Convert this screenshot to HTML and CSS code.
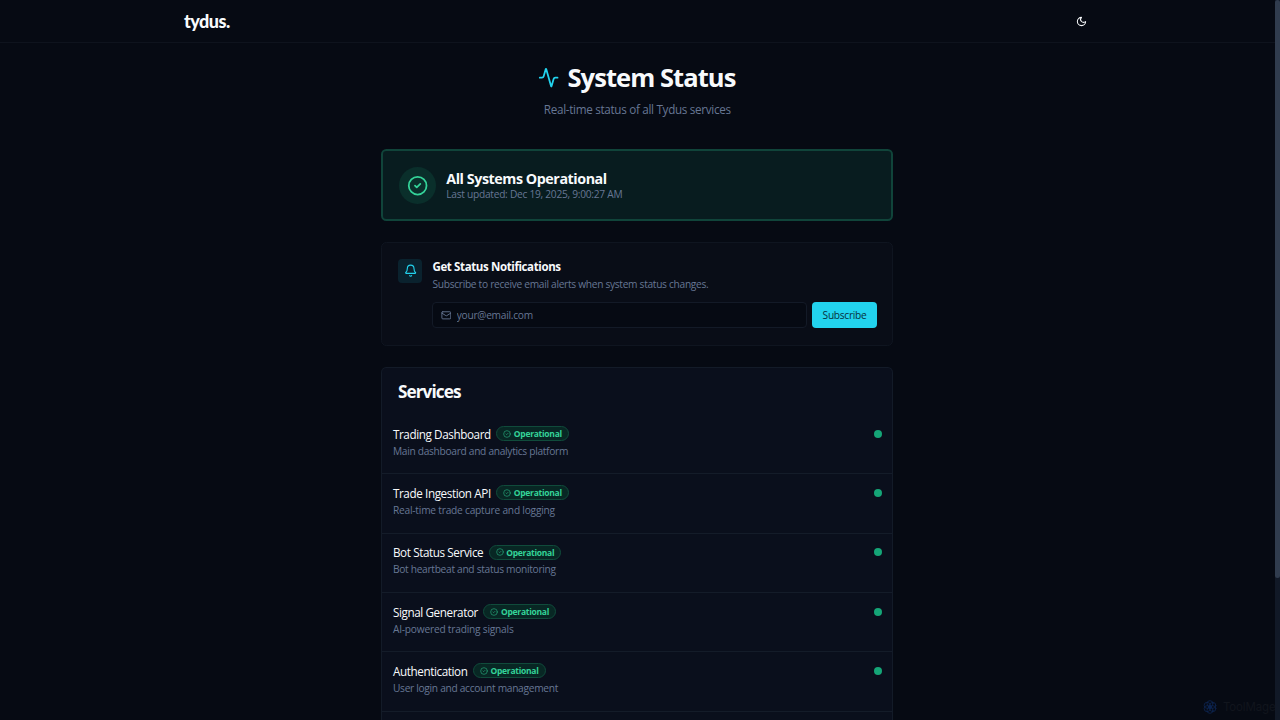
FILE: index.html
```
<!DOCTYPE html>
<html lang="en">
<head>
<meta charset="UTF-8">
<title>System Status - Tydus</title>
<link rel="stylesheet" href="styles.css">
</head>
<body>
<!-- shared icons -->
<svg class="sprite" width="0" height="0">
<symbol id="check" viewBox="0 0 24 24"><circle cx="12" cy="12" r="10"/><path d="m9 12 2 2 4-4"/></symbol>
</svg>

<header class="topbar">
<div class="topbar-inner">
<a class="logo">tydus.</a>
<svg class="icon moon" viewBox="0 0 24 24"><path d="M12 3a6 6 0 0 0 9 9 9 9 0 1 1-9-9Z"/></svg>
</div>
</header>

<main class="page">
<div class="hero">
<div class="hero-title">
<svg class="icon pulse" viewBox="0 0 24 24"><path d="M22 12h-2.48a2 2 0 0 0-1.93 1.46l-2.35 8.36a.25.25 0 0 1-.48 0L9.24 2.18a.25.25 0 0 0-.48 0l-2.35 8.36A2 2 0 0 1 4.49 12H2"/></svg>
<h1>System Status</h1>
</div>
<p class="hero-sub">Real-time status of all Tydus services</p>
</div>

<section class="overall">
<div class="overall-icon"><svg class="icon"><use href="#check"/></svg></div>
<div>
<h2>All Systems Operational</h2>
<p class="updated">Last updated: Dec 19, 2025, 9:00:27 AM</p>
</div>
</section>

<section class="notify">
<div class="notify-icon">
<svg class="icon" viewBox="0 0 24 24"><path d="M10.27 21a2 2 0 0 0 3.46 0"/><path d="M3.26 15.33A1 1 0 0 0 4 17h16a1 1 0 0 0 .74-1.67C19.41 13.96 18 12.5 18 8A6 6 0 0 0 6 8c0 4.5-1.41 5.96-2.74 7.33"/></svg>
</div>
<div class="notify-body">
<h3>Get Status Notifications</h3>
<p class="notify-sub">Subscribe to receive email alerts when system status changes.</p>
<form class="notify-form">
<label class="field">
<svg class="icon" viewBox="0 0 24 24"><rect x="2" y="4" width="20" height="16" rx="2"/><path d="m22 7-8.97 5.7a1.94 1.94 0 0 1-2.06 0L2 7"/></svg>
<input type="email" placeholder="your@email.com">
</label>
<button type="button">Subscribe</button>
</form>
</div>
</section>

<section class="services">
<h2>Services</h2>
<div class="service">
<div class="service-name"><span class="name">Trading Dashboard</span><span class="badge"><svg class="icon"><use href="#check"/></svg><b>Operational</b></span><i class="dot"></i></div>
<p>Main dashboard and analytics platform</p>
</div>
<div class="service">
<div class="service-name"><span class="name">Trade Ingestion API</span><span class="badge"><svg class="icon"><use href="#check"/></svg><b>Operational</b></span><i class="dot"></i></div>
<p class="loose">Real-time trade capture and logging</p>
</div>
<div class="service">
<div class="service-name"><span class="name">Bot Status Service</span><span class="badge"><svg class="icon"><use href="#check"/></svg><b>Operational</b></span><i class="dot"></i></div>
<p>Bot heartbeat and status monitoring</p>
</div>
<div class="service">
<div class="service-name"><span class="name">Signal Generator</span><span class="badge"><svg class="icon"><use href="#check"/></svg><b>Operational</b></span><i class="dot"></i></div>
<p class="loose">AI-powered trading signals</p>
</div>
<div class="service">
<div class="service-name"><span class="name">Authentication</span><span class="badge"><svg class="icon"><use href="#check"/></svg><b>Operational</b></span><i class="dot"></i></div>
<p>User login and account management</p>
</div>
</section>
</main>

<div class="scroll-track"><div class="scroll-thumb"></div></div>
<div class="mark">
<svg class="icon" viewBox="0 0 24 24"><circle cx="12" cy="12" r="2.5"/><circle cx="12" cy="7" r="4.5"/><circle cx="16.3" cy="9.5" r="4.5"/><circle cx="16.3" cy="14.5" r="4.5"/><circle cx="12" cy="17" r="4.5"/><circle cx="7.7" cy="14.5" r="4.5"/><circle cx="7.7" cy="9.5" r="4.5"/></svg>
<span>ToolMage</span>
</div>
</body>
</html>
```

FILE: styles.css
```
* { box-sizing: border-box; margin: 0; padding: 0; }
html, body { height: 720px; overflow: hidden; }
body { background: #060a13; color: #f8fafc; font-family: "Open Sans", "Noto Sans", sans-serif; font-size: 10.67px; }
.icon, symbol { fill: none; stroke: currentColor; stroke-width: 2; stroke-linecap: round; stroke-linejoin: round; display: block; flex: none; }
.sprite { position: absolute; }
.topbar { height: 43px; border-bottom: 1px solid #0e131d; }
.topbar-inner { width: 907px; margin-left: 184px; height: 42px; display: flex; align-items: center; justify-content: space-between; }
.logo { font-family: Lato, sans-serif; font-weight: 900; font-size: 18px; line-height: 20px; letter-spacing: -0.5px; }
.moon { width: 11px; height: 11px; margin-right: 4.3px; stroke-width: 2.3; }
.page { width: 512px; margin-left: 381.3px; }
.hero { height: 106.5px; padding-top: 17px; text-align: center; }
.hero-title { display: flex; align-items: center; justify-content: center; gap: 8px; height: 34px; }
.pulse { width: 21.3px; height: 21.3px; color: #22d3ee; margin: 1px 0 0 -1px; }
h1 { font-size: 25.5px; line-height: 34px; letter-spacing: -0.93px; font-weight: 700; }
.hero-sub { margin-top: 7px; font-size: 11.7px; line-height: 16px; color: #677794; letter-spacing: -0.31px; }
.overall { height: 72px; margin-top: -0.2px; border: 2px solid #10443a; border-radius: 5.3px; background: #081c1f; display: flex; align-items: center; gap: 10.4px; padding: 0 15.3px; }
.overall-icon { width: 37.3px; height: 37.3px; border-radius: 50%; background: #0a2f2b; color: #34d399; display: flex; align-items: center; justify-content: center; }
.overall-icon .icon { width: 21.3px; height: 21.3px; }
.overall h2 { font-size: 14.3px; line-height: 17px; letter-spacing: -0.45px; margin-top: 1px; }
.updated { font-size: 10.2px; line-height: 15px; color: #677794; letter-spacing: -0.27px; }
.notify { margin-top: 20.7px; height: 103.5px; border: 1px solid #0f1520; border-radius: 5.3px; background: #090d17; padding: 16px 15.3px 0 16px; display: flex; gap: 10.2px; }
.notify-icon { width: 24px; height: 24px; border-radius: 4px; background: #0a222e; color: #22d3ee; display: flex; align-items: center; justify-content: center; }
.notify-icon .icon { width: 13.3px; height: 13.3px; }
.notify-body { flex: 1; }
h3 { font-size: 11.5px; line-height: 16px; font-weight: 700; letter-spacing: -0.38px; }
.notify-sub { margin-top: 1px; font-size: 10.2px; line-height: 16px; color: #677794; letter-spacing: -0.3px; }
.notify-form { display: flex; gap: 5.3px; margin-top: 9.7px; }
.field { flex: 1; height: 26.7px; border: 1px solid #131a27; border-radius: 4px; background: #060a13; display: flex; align-items: center; gap: 5.3px; padding-left: 7.3px; color: #677794; }
.field .icon { width: 10.67px; height: 10.67px; }
.field input { border: 0; background: none; outline: 0; width: 200px; font: 10.2px "Open Sans", sans-serif; letter-spacing: -0.27px; }
.field input::placeholder { color: #677794; }
.notify-form button { width: 65px; height: 26.7px; border: 0; border-radius: 4px; background: #22d3ee; color: #07303c; font: 500 10.2px "Open Sans", sans-serif; letter-spacing: -0.3px; }
.services { margin-top: 21px; height: 353.3px; border: 1px solid #131b28; border-bottom: 0; border-radius: 5.3px 5.3px 0 0; background: #0a0f1c; }
.services h2 { font-size: 17.2px; line-height: 24px; letter-spacing: -0.9px; padding: 12px 15.6px 0; height: 47.5px; }
.service { height: 59.33px; padding: 10.67px; border-bottom: 1px solid #141c29; }
.service-name { display: flex; align-items: center; height: 16px; }
.name { font-size: 11.7px; line-height: 16px; letter-spacing: -0.4px; }
.badge { display: flex; align-items: center; gap: 2.7px; height: 15px; margin-left: 5.3px; padding: 0 6px; border: 1px solid #104b3b; border-radius: 8px; background: #082724; color: #34d399; font-size: 8.5px; line-height: 13px; letter-spacing: -0.27px; }
.badge .icon { width: 8px; height: 8px; opacity: .75; }
.dot { width: 8px; height: 8px; border-radius: 50%; background: #15a577; margin-left: auto; }
.service p { margin-top: 1px; font-size: 10.2px; line-height: 16px; color: #677794; letter-spacing: -0.3px; }
.service .loose { letter-spacing: -0.22px; }
.scroll-track { position: absolute; right: 0; top: 0; width: 5.3px; height: 720px; background: #111927; }
.scroll-thumb { height: 577.5px; background: #303c4e; border-radius: 3px; }
.mark { position: absolute; left: 1202px; top: 699px; display: flex; align-items: center; gap: 5px; height: 16px; font: 11.5px Inter, sans-serif; letter-spacing: -0.15px; color: #11151d; }
.mark .icon { width: 16px; height: 16px; color: #0d2450; stroke-width: 1.2; }
```
